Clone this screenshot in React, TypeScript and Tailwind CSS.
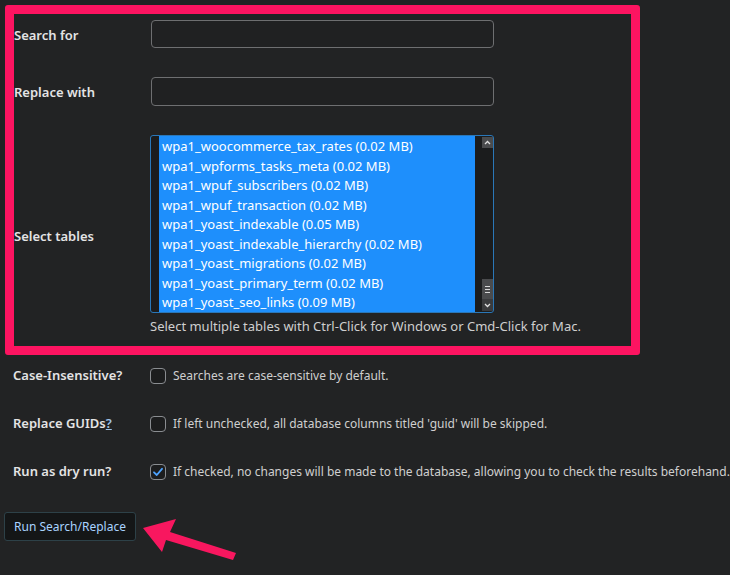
import React from 'react';

const tables = [
  'wpa1_woocommerce_tax_rates (0.02 MB)',
  'wpa1_wpforms_tasks_meta (0.02 MB)',
  'wpa1_wpuf_subscribers (0.02 MB)',
  'wpa1_wpuf_transaction (0.02 MB)',
  'wpa1_yoast_indexable (0.05 MB)',
  'wpa1_yoast_indexable_hierarchy (0.02 MB)',
  'wpa1_yoast_migrations (0.02 MB)',
  'wpa1_yoast_primary_term (0.02 MB)',
  'wpa1_yoast_seo_links (0.09 MB)',
];

function Checkbox({ checked }: { checked?: boolean }) {
  return (
    <span className="w-4 h-4 shrink-0 rounded-[4px] border border-[#8a8d91] bg-[#1c1d1e] flex items-center justify-center">
      {checked && (
        <svg width="12" height="12" viewBox="0 0 12 12" fill="none">
          <path d="M2 6.3 L4.8 9 L10 2.8" stroke="#4da3ff" strokeWidth="1.8" strokeLinecap="round" strokeLinejoin="round" />
        </svg>
      )}
    </span>
  );
}

function OptionRow({ label, children }: { label: React.ReactNode; children: React.ReactNode }) {
  return (
    <div className="flex items-center h-4">
      <div className="w-[145px] shrink-0 pl-[8px] whitespace-nowrap font-semibold text-[13px] text-[#e4e4e4]">{label}</div>
      <div className="flex items-center gap-[7px] text-[12px] text-[#cfcfcf] whitespace-nowrap">{children}</div>
    </div>
  );
}

export default function App() {
  return (
    <div className="w-[730px] h-[575px] bg-[#222324] relative overflow-hidden" style={{ fontFamily: '"Noto Sans", "Open Sans", sans-serif' }}>
      <div className="pt-[5px] pl-[5px]">
        {/* highlighted block */}
        <div className="w-[635px] h-[350px] border-[9px] border-[#fd1461] rounded-[3px]">
          <div className="flex items-center mt-[6px]">
            <div className="w-[137px] pt-[3px] font-semibold text-[13px] text-[#e4e4e4]">Search for</div>
            <div className="w-[343px] h-[28px] rounded-[4px] border border-[#6e6f71] bg-[#202122]" />
          </div>
          <div className="flex items-center mt-[29px]">
            <div className="w-[137px] pt-[3px] font-semibold text-[13px] text-[#e4e4e4]">Replace with</div>
            <div className="w-[343px] h-[29px] rounded-[4px] border border-[#6e6f71] bg-[#202122]" />
          </div>
          <div className="flex items-center mt-[29px]">
            <div className="w-[136px] pt-[3px] font-semibold text-[13px] text-[#e4e4e4]">Select tables</div>
            <div className="flex flex-col">
              <div className="w-[344px] h-[178px] rounded-[3px] border border-[#2a77b8] bg-[#1b1c1d] flex">
                <div className="w-[8px]" />
                <div className="flex-1 bg-[#1e8ffc] pl-[3px] pt-[1px]">
                  {tables.map(t => (
                    <div key={t} className="h-[19.5px] leading-[19.5px] text-[13px] text-white whitespace-nowrap">{t}</div>
                  ))}
                </div>
                <div className="w-[18px] flex justify-end">
                  <div className="w-[11px] flex flex-col">
                    <div className="h-[11px] mt-[1px] bg-[#4a4b4d] flex items-center justify-center">
                      <svg width="7" height="5" viewBox="0 0 7 5"><path d="M1 4 L3.5 1.5 L6 4" stroke="#e0e0e0" strokeWidth="1.3" fill="none" /></svg>
                    </div>
                    <div className="flex-1" />
                    <div className="h-[20px] bg-[#4a4b4d] flex flex-col items-center justify-center gap-[2px]">
                      <div className="w-[5px] h-[1px] bg-[#d8d8d8]" />
                      <div className="w-[5px] h-[1px] bg-[#d8d8d8]" />
                      <div className="w-[5px] h-[1px] bg-[#d8d8d8]" />
                    </div>
                    <div className="h-[12px] mb-[1px] bg-[#3a3b3d] flex items-center justify-center">
                      <svg width="7" height="5" viewBox="0 0 7 5"><path d="M1 1 L3.5 3.5 L6 1" stroke="#e0e0e0" strokeWidth="1.3" fill="none" /></svg>
                    </div>
                  </div>
                </div>
              </div>
              <div className="mt-[4px] h-[18px] text-[13px] text-[#cfcfcf] whitespace-nowrap">
                Select multiple tables with Ctrl-Click for Windows or Cmd-Click for Mac.
              </div>
            </div>
          </div>
        </div>

        <div className="mt-[13px] flex flex-col gap-[32px]">
          <OptionRow label="Case-Insensitive?">
            <Checkbox />
            <span>Searches are case-sensitive by default.</span>
          </OptionRow>
          <OptionRow label={<>Replace GUIDs<span className="underline text-[#9fc3e8]">?</span></>}>
            <Checkbox />
            <span>If left unchecked, all database columns titled 'guid' will be skipped.</span>
          </OptionRow>
          <OptionRow label="Run as dry run?">
            <Checkbox checked />
            <span>If checked, no changes will be made to the database, allowing you to check the results beforehand.</span>
          </OptionRow>
        </div>

        <button className="mt-[32px] -ml-[1px] w-[132px] h-[29px] rounded-[3px] border border-[#2d4148] bg-[#141617] text-[12px] text-[#a9d3ff]">
          Run Search/Replace
        </button>
      </div>

      {/* pointer arrow */}
      <svg className="absolute left-0 top-0" width="730" height="575" viewBox="0 0 730 575">
        <polygon points="143,528 176,519 170,532 236,553 233,560 166,540 162,552" fill="#f8175f" />
      </svg>
    </div>
  );
}
